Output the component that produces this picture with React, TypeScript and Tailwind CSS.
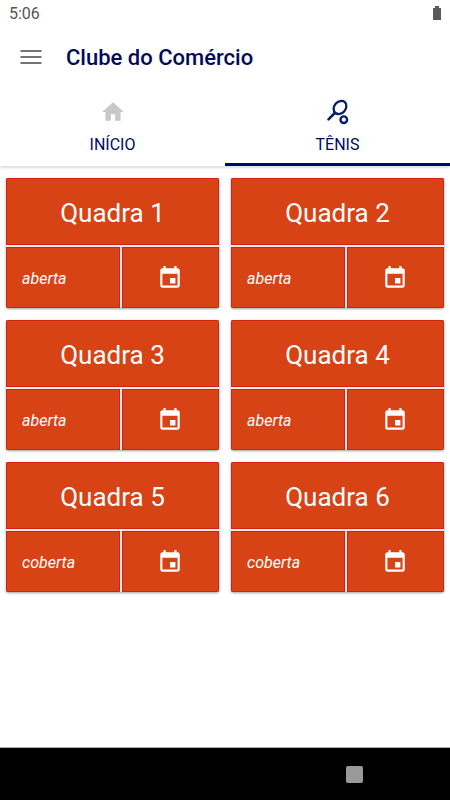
import React from 'react';

type Court = {
    id: number;
    name: string;
    kind: string;
};

const courts: Court[] = [
    { id: 1, name: 'Quadra 1', kind: 'aberta' },
    { id: 2, name: 'Quadra 2', kind: 'aberta' },
    { id: 3, name: 'Quadra 3', kind: 'aberta' },
    { id: 4, name: 'Quadra 4', kind: 'aberta' },
    { id: 5, name: 'Quadra 5', kind: 'coberta' },
    { id: 6, name: 'Quadra 6', kind: 'coberta' },
];

const BatteryIcon = () => (
    <svg width="10" height="16" viewBox="0 0 10 16" aria-hidden="true">
        <path d="M3 0h4v2h2v12H1V2h2z" fill="#5a5a5a" />
    </svg>
);

const MenuIcon = () => (
    <svg width="22" height="18" viewBox="0 0 22 18" aria-hidden="true">
        <path d="M0.5 1h21v2h-21zM0.5 7h21v2h-21zM0.5 13h21v2h-21z" fill="#757575" />
    </svg>
);

const HomeIcon = () => (
    <svg width="26" height="26" viewBox="0 0 24 24" aria-hidden="true">
        <path d="M10 20v-6h4v6h5v-8h3L12 3 2 12h3v8z" fill="#c8c8c8" />
    </svg>
);

const TennisIcon = () => (
    <svg width="26" height="26" viewBox="0 0 26 26" fill="none" stroke="#03206b" aria-hidden="true">
        <ellipse cx="15" cy="8.5" rx="5.7" ry="7.2" strokeWidth="2.3" transform="rotate(40 15 8.5)" />
        <path d="M9.8 14L3.500 20.300" strokeWidth="2.600" strokeLinecap="round" />
        <path d="M9 10.500c.3 1.200.3 2.300.2 3.900 1.400-.2 2.400-.2 3.800 0" strokeWidth="1.800" />
        <circle cx="18.800" cy="20.700" r="3.300" strokeWidth="2.400" />
    </svg>
);

const EventIcon = () => (
    <svg width="26" height="26" viewBox="0 0 24 24" aria-hidden="true">
        <path
            d="M17 12h-5v5h5v-5zM16 1v2H8V1H6v2H5c-1.110 0-1.990.9-1.990 2L3 19c0 1.100.89 2 2 2h14c1.100 0 2-.9 2-2V5c0-1.100-.9-2-2-2h-1V1h-2zm3 18H5V8h14v11z"
            fill="#fff"
        />
    </svg>
);

const CourtCard = ({ court }: { court: Court }) => (
    <article className="overflow-hidden rounded-xs bg-[#fce9e6] shadow-sm shadow-black/30">
        <h2 className="flex h-[67px] items-center justify-center border border-[#d92010] bg-[#d84315] pt-0.5 text-[26px] leading-8 text-white">
            {court.name}
        </h2>
        <div className="mt-0.5 grid h-[61px] grid-cols-[114fr_97fr] gap-0.5">
            <p className="flex items-center border border-[#d92010] bg-[#d84315] pt-0.5 pl-[15px] text-base text-white italic">
                {court.kind}
            </p>
            <button
                type="button"
                aria-label={`Reservar ${court.name}`}
                className="flex items-center justify-center border border-[#d92010] bg-[#d84315] pr-0.5"
            >
                <EventIcon />
            </button>
        </div>
    </article>
);

const App = () => (
    <div className="flex min-h-screen flex-col bg-white font-[Roboto,sans-serif]">
        <header className="border-b border-[#e4e4e4] shadow-sm shadow-black/10">
            <div className="flex h-7 items-center justify-between pr-2 pl-[9px] text-base text-[#555555]">
                <span>5:06</span>
                <BatteryIcon />
            </div>
            <div className="flex h-[60px] items-center gap-6 pl-5">
                <button type="button" aria-label="Menu">
                    <MenuIcon />
                </button>
                <h1 className="text-[22px] leading-7 font-medium text-[#000a5c]">Clube do Comércio</h1>
            </div>
            <nav className="grid grid-cols-2 text-base text-[#000a5c]">
                <a href="#inicio" className="flex h-[78px] flex-col items-center gap-2 pt-[11px]">
                    <HomeIcon />
                    INÍCIO
                </a>
                <a
                    href="#tenis"
                    aria-current="page"
                    className="flex h-[78px] flex-col items-center gap-2 border-b-3 border-[#000a5c] pt-[11px]"
                >
                    <TennisIcon />
                    TÊNIS
                </a>
            </nav>
        </header>
        <main className="grid grow grid-cols-2 content-start gap-3 px-1.5 py-[11px]">
            {courts.map((court) => (
                <CourtCard key={court.id} court={court} />
            ))}
        </main>
        <footer className="flex h-[53px] items-center border-t border-[#a8a8a8] bg-black">
            <div className="w-10/13" />
            <button type="button" aria-label="Recentes" className="size-[17px] rounded-xs bg-[#999999]" />
        </footer>
    </div>
);

export default App;
